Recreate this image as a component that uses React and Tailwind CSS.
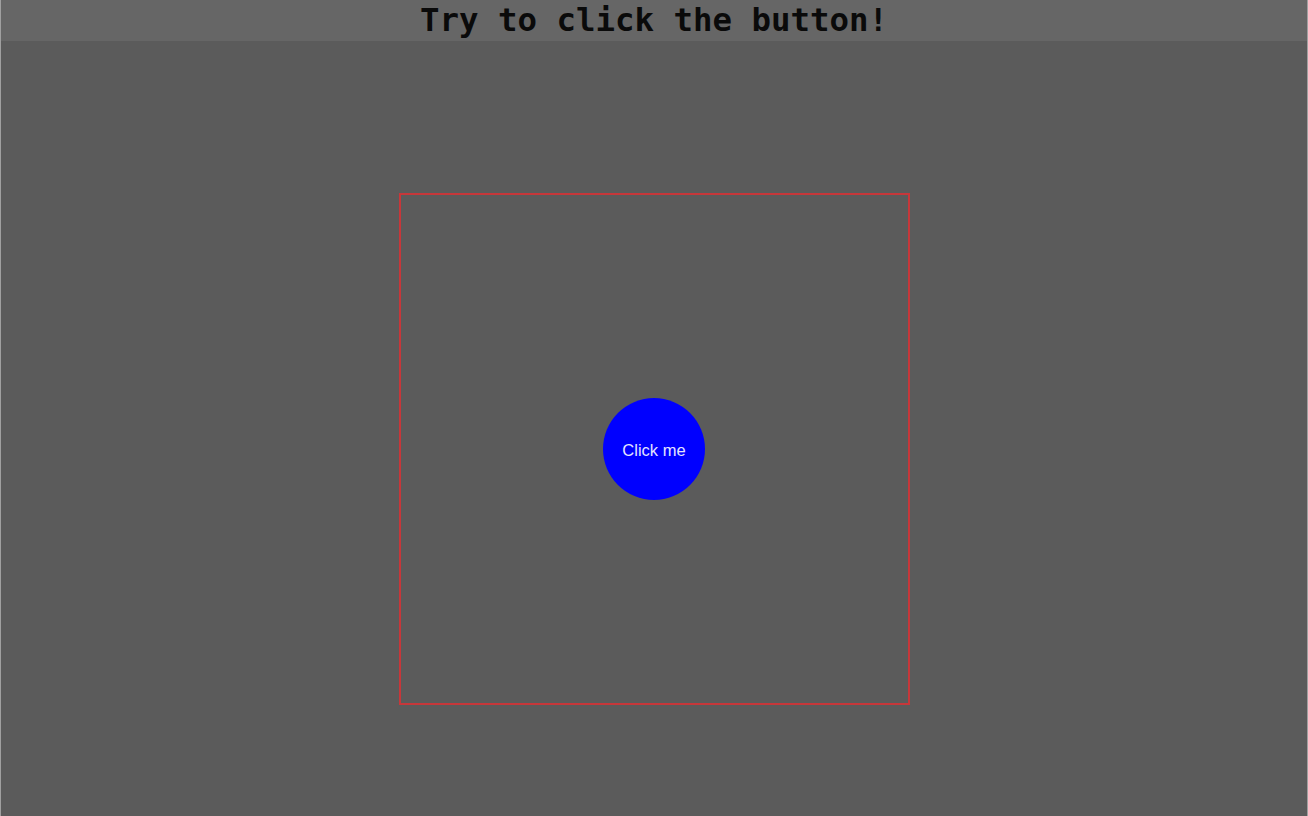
import { useState } from "react";

const App = () => {
  const [clicks, setClicks] = useState(0);

  return (
    <div className="min-h-screen bg-[#5b5b5b] border-x border-[#a0a0a0] flex flex-col">
      <div className="h-[41px] bg-[#666666] flex justify-center">
        <h1 className="font-['DejaVu_Sans_Mono',monospace] font-bold text-[32.4px] leading-[41px] text-[#0a0a0a]">
          Try to click the button!
        </h1>
      </div>

      <div className="flex justify-center pt-[152px]">
        <div className="w-[511px] h-[512px] border-2 border-[#c7373a] flex items-center justify-center">
          <button
            className="w-[102px] h-[102px] rounded-full bg-[#0000ff] text-[#e4e4ff] text-[16.5px] pt-[3px] font-['Liberation_Sans',Arial,sans-serif]"
            onClick={() => setClicks(clicks + 1)}
          >
            Click me
          </button>
        </div>
      </div>
    </div>
  );
};

export default App;
